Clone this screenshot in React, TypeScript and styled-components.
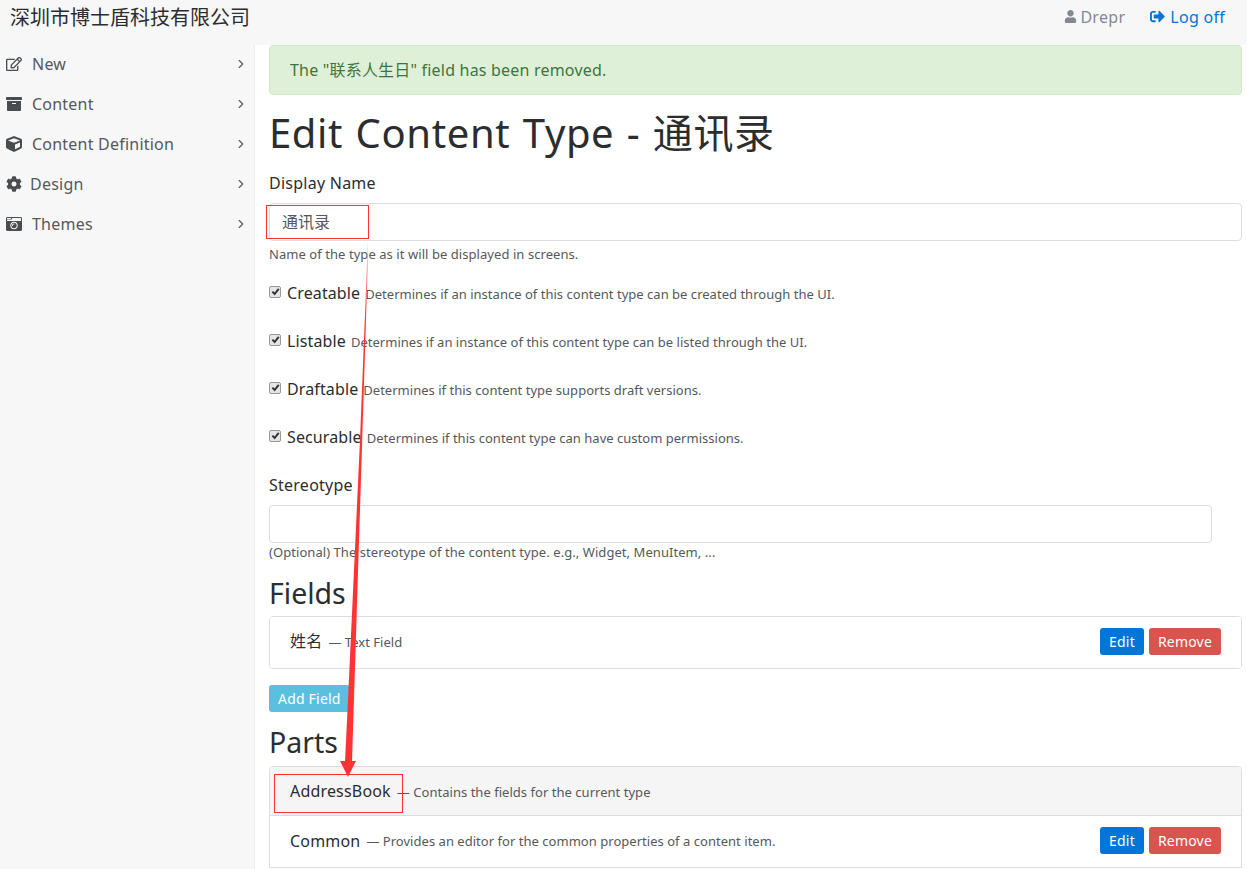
import React from "react";
import styled, { createGlobalStyle } from "styled-components";
import { FaRegEdit, FaArchive, FaCube, FaCog, FaCameraRetro, FaUser, FaSignOutAlt } from "react-icons/fa";
import { LuChevronRight } from "react-icons/lu";

const Global = createGlobalStyle`
  html, body { margin: 0; padding: 0; height: 869px; overflow: hidden; background: #fff; }
  body { font-family: "Noto Sans", "Noto Sans CJK SC", sans-serif; color: #373a3c; font-size: 16px; }
  * { box-sizing: border-box; }
`;
const Page = styled.div`position: relative; width: 1247px; height: 869px; overflow: hidden;`;
const TopBar = styled.header`height: 45px; background: #f7f7f7; display: flex; align-items: center; padding: 0 22px 12px 10px;`;
const Brand = styled.div`font-family: "Noto Sans CJK SC", sans-serif; font-size: 20px; color: #2b2d2f; flex: 1; margin-top: -1px;`;
const UserName = styled.span`display: flex; align-items: center; gap: 3px; color: #818a91; font-size: 16px; letter-spacing: 0.3px; margin-right: 25px;`;
const LogOff = styled.a`display: flex; align-items: center; gap: 5px; color: #0275d8; font-size: 16px; letter-spacing: 0.27px;`;
const Body = styled.div`display: flex; height: 824px;`;
const Side = styled.nav`width: 255px; flex: none; background: #f7f7f7; border-right: 1px solid #eee;`;
const NavList = styled.div`margin-top: -1px;`;
const NavRow = styled.div`height: 40px; display: flex; align-items: center; padding: 0 6px 0 6px; color: #55595c; font-size: 16px; letter-spacing: 0.22px;`;
const NavIcon = styled.span<{ $w: number }>`width: ${(p) => p.$w}px; display: flex; color: #4a4d50; font-size: 16px;`;
const NavLabel = styled.span`flex: 1;`;
const Main = styled.main`flex: 1; padding: 0 5px 0 14px; background: #fff;`;
const Alert = styled.div`height: 50px; background: #dff0d8; border: 1px solid #d0e9c6; border-radius: 4px; color: #3c763d; display: flex; align-items: center; padding: 0 20px 2px; font-size: 16px; letter-spacing: 0.2px;`;
const H1 = styled.h1`margin: 11px 0 0; height: 54px; line-height: 54px; font-size: 40px; font-weight: 400; color: #2b2d2f; letter-spacing: 0.62px; word-spacing: 1.5px;`;
const Label = styled.div<{ $mt?: number }>`margin-top: ${(p) => p.$mt ?? 11}px; line-height: 24px; font-size: 16px; color: #2b2d2f; letter-spacing: 0.25px;`;
const Input = styled.div<{ $w?: string }>`margin-top: 8px; height: 38px; width: ${(p) => p.$w || "100%"}; border: 1px solid #ddd; border-radius: 4px; padding: 0 12px 2px; display: flex; align-items: center; font-size: 16px; color: #55595c;`;
const Help = styled.div<{ $mt?: number }>`margin-top: ${(p) => p.$mt ?? 5}px; line-height: 16px; font-size: 13px; color: #55595c; letter-spacing: 0.06px;`;
const CheckRow = styled.div`height: 24px; margin-bottom: 24px; display: flex; align-items: center;`;
const CheckList = styled.div`margin-top: 19px;`;
const Box = styled.span`width: 12px; height: 12px; margin: -3px 6px 0 0; background: #e6e6e6; border: 1px solid #9a9a9a; border-radius: 2px; display: flex; align-items: center; justify-content: center; flex: none;`;
const CheckName = styled.span`color: #2b2d2f; font-size: 16px; margin-right: 5px; letter-spacing: 0.12px;`;
const CheckHelp = styled.span`font-size: 13px; color: #55595c; letter-spacing: 0.02px; margin-top: 2px;`;
const H2 = styled.h2<{ $mt: number; $mb?: number }>`margin: ${(p) => p.$mt}px 0 ${(p) => p.$mb ?? 0}px; height: 40px; line-height: 40px; font-size: 28.5px; font-weight: 400; color: #2b2d2f;`;
const List = styled.div<{ $closed?: boolean }>`border: 1px solid #ddd; border-radius: ${(p) => (p.$closed ? "4px" : "4px 4px 0 0")}; overflow: hidden;`;
const Row = styled.div<{ $active?: boolean }>`height: ${(p) => (p.$active ? 49 : 51)}px; padding: ${(p) => (p.$active ? "0 20px" : "0 20px 2px")}; display: flex; align-items: center; gap: 6px; background: ${(p) => (p.$active ? "#f5f5f5" : "#fff")}; border-bottom: ${(p) => (p.$active ? "1px solid #ddd" : "none")};`;
const RowName = styled.span`font-size: 16px; color: #2b2d2f; letter-spacing: 0.18px;`;
const CjkName = styled(RowName)`margin-top: -4px;`;
const RowHelp = styled.span<{ $active?: boolean }>`font-size: 13px; color: #55595c; letter-spacing: 0.03px; flex: 1; margin-top: ${(p) => (p.$active ? 2 : 0)}px;`;
const Btn = styled.button<{ $bg: string }>`height: 27px; padding: 0 9px; border: 0; border-radius: 3px; background: ${(p) => p.$bg}; color: #fff; font: 14px "Noto Sans", sans-serif; letter-spacing: 0.2px; flex: none; margin-left: -1px;`;
const AddWrap = styled.div`margin-top: 16px; height: 27px; margin-left: 1px;`;
const Overlay = styled.svg`position: absolute; left: 0; top: 0; pointer-events: none;`;

const nav = [
  { label: "New", icon: <FaRegEdit />, w: 26 },
  { label: "Content", icon: <FaArchive />, w: 26 },
  { label: "Content Definition", icon: <FaCube />, w: 26 },
  { label: "Design", icon: <FaCog />, w: 24 },
  { label: "Themes", icon: <FaCameraRetro />, w: 26 },
];
const checks = [
  ["Creatable", "Determines if an instance of this content type can be created through the UI."],
  ["Listable", "Determines if an instance of this content type can be listed through the UI."],
  ["Draftable", "Determines if this content type supports draft versions."],
  ["Securable", "Determines if this content type can have custom permissions."],
];

const Tick = () => (
  <svg width="9" height="9" viewBox="0 0 10 10"><path d="M1.5 5.2 4 7.8 8.6 2" fill="none" stroke="#333" strokeWidth="2.2" /></svg>
);

export default function App() {
  return (
    <Page>
      <Global />
      <TopBar>
        <Brand>深圳市博士盾科技有限公司</Brand>
        <UserName><FaUser size={13} />Drepr</UserName>
        <LogOff><FaSignOutAlt size={15} />Log off</LogOff>
      </TopBar>
      <Body>
        <Side>
          <NavList>
            {nav.map((n) => (
              <NavRow key={n.label}>
                <NavIcon $w={n.w}>{n.icon}</NavIcon>
                <NavLabel>{n.label}</NavLabel>
                <LuChevronRight size={14} />
              </NavRow>
            ))}
          </NavList>
        </Side>
        <Main>
          <Alert>The "联系人生日" field has been removed.</Alert>
          <H1>Edit Content Type - 通讯录</H1>
          <Label>Display Name</Label>
          <Input>通讯录</Input>
          <Help>Name of the type as it will be displayed in screens.</Help>
          <CheckList>
            {checks.map(([a, b]) => (
              <CheckRow key={a}>
                <Box><Tick /></Box>
                <CheckName>{a}</CheckName>
                <CheckHelp>{b}</CheckHelp>
              </CheckRow>
            ))}
          </CheckList>
          <Label $mt={0}>Stereotype</Label>
          <Input $w="943px" />
          <Help $mt={1}>(Optional) The stereotype of the content type. e.g., Widget, MenuItem, ...</Help>
          <H2 $mt={13} $mb={3}>Fields</H2>
          <List $closed>
            <Row>
              <CjkName>姓名</CjkName>
              <RowHelp>— Text Field</RowHelp>
              <Btn $bg="#0275d8">Edit</Btn>
              <Btn $bg="#d9534f">Remove</Btn>
            </Row>
          </List>
          <AddWrap><Btn $bg="#5bc0de">Add Field</Btn></AddWrap>
          <H2 $mt={10} $mb={4}>Parts</H2>
          <List>
            <Row $active>
              <RowName>AddressBook</RowName>
              <RowHelp $active>— Contains the fields for the current type</RowHelp>
            </Row>
            <Row>
              <RowName>Common</RowName>
              <RowHelp>— Provides an editor for the common properties of a content item.</RowHelp>
              <Btn $bg="#0275d8">Edit</Btn>
              <Btn $bg="#d9534f">Remove</Btn>
            </Row>
          </List>
        </Main>
      </Body>
      <Overlay width="1247" height="869" viewBox="0 0 1247 869">
        <defs>
          <linearGradient id="arrowFade" x1="0" y1="238" x2="0" y2="330" gradientUnits="userSpaceOnUse">
            <stop offset="0" stopColor="#fbb" />
            <stop offset="1" stopColor="#f33" />
          </linearGradient>
        </defs>
        <rect x="266.5" y="205.5" width="102" height="33" fill="none" stroke="#f33" />
        <rect x="274.5" y="774.5" width="128" height="38" fill="none" stroke="#f33" />
        <path d="M368 238 L367.6 270 L352 762 L345 762 L348 700 L360 440 Z" fill="url(#arrowFade)" />
        <path d="M340 761 L356 761 L348 777 Z" fill="#f33" />
      </Overlay>
    </Page>
  );
}
